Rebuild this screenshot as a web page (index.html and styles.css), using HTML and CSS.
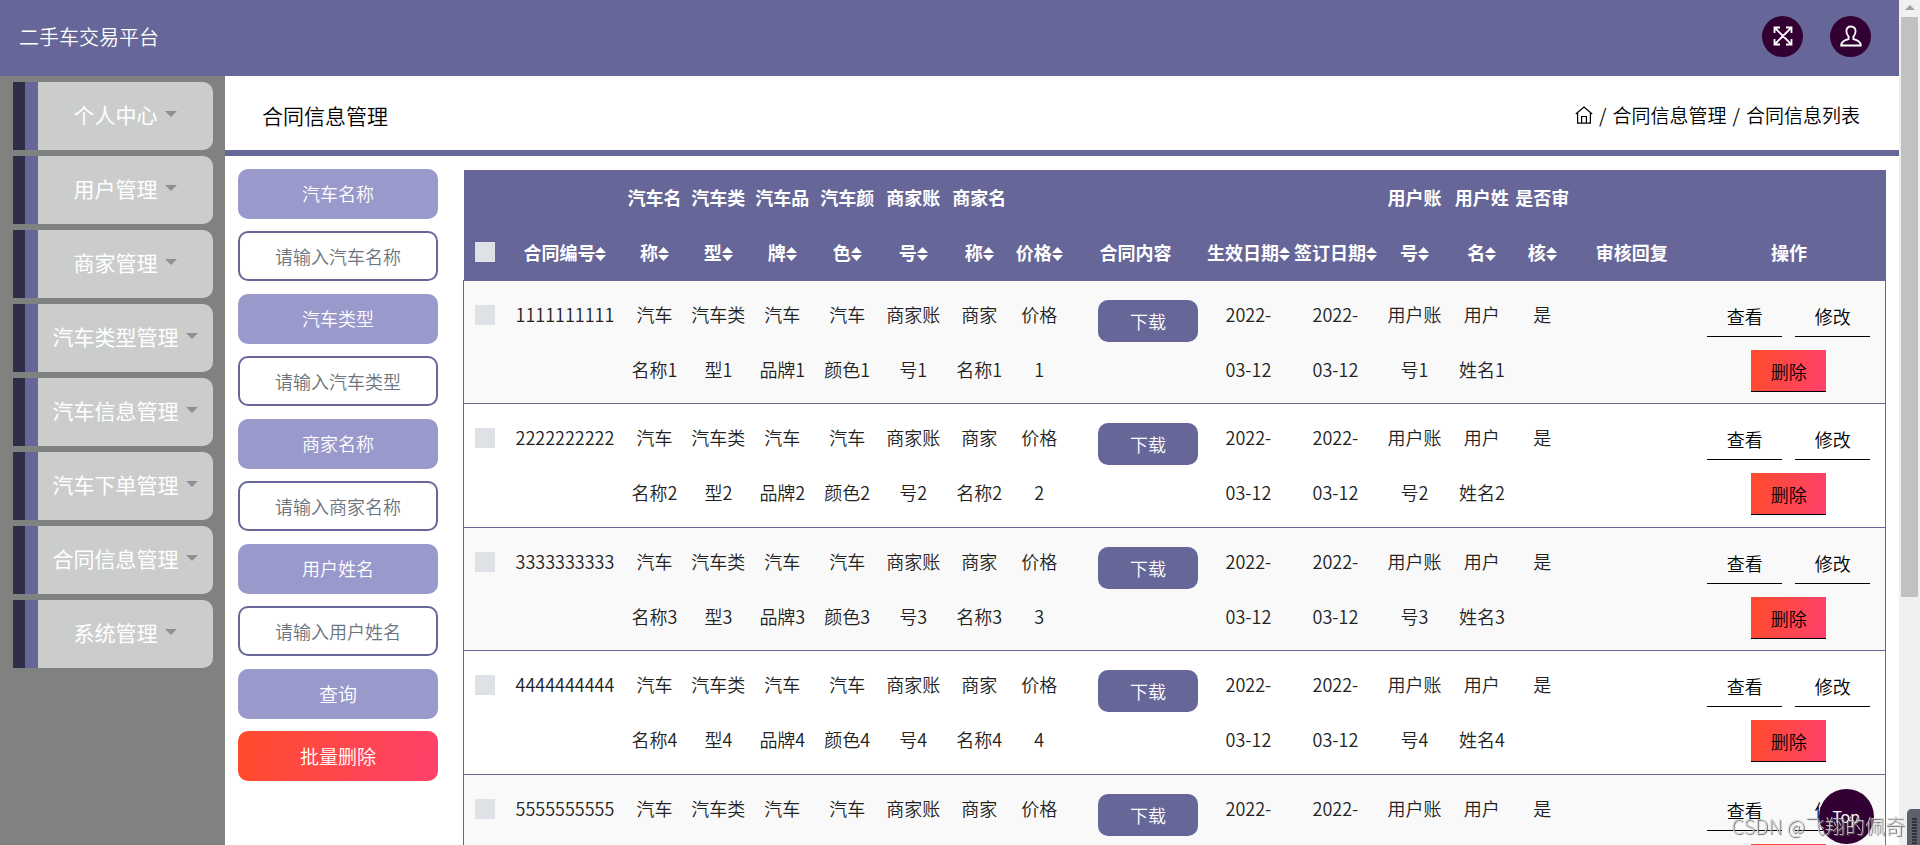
FILE: index.html
```html
<!DOCTYPE html>
<html lang="zh-CN">
<head>
<meta charset="utf-8">
<title>二手车交易平台</title>
<link rel="stylesheet" href="styles.css">
</head>
<body>
<svg class="sprite" aria-hidden="true">
  <symbol id="sort" viewBox="0 0 11 14"><path d="M5.500 0L11 6H0zM5.500 14L11 8H0z" fill="currentColor"/></symbol>
</svg>
<div class="app">
  <header class="topbar">
    <span class="brand">二手车交易平台</span>
    <div class="tools">
      <button class="round" type="button" aria-label="全屏">
        <svg viewBox="0 0 20 20" width="20" height="20" fill="none" stroke="currentColor" stroke-width="1.800"><path d="M1.500 7V1.500H7M13 1.500h5.500V7M18.500 13v5.500H13M7 18.500H1.500V13M2 2l16 16M18 2L2 18"/></svg>
      </button>
      <button class="round" type="button" aria-label="用户">
        <svg viewBox="0 0 22 22" width="22" height="22" fill="none" stroke="currentColor" stroke-width="1.800"><path d="M11 1.500c-3 0-4.600 2-4.600 4.800 0 2.600 1 4 2.200 5.300v2.600C4.500 15.400 1.500 16.400 1.200 20.500h19.600c-.3-4.100-3.300-5.100-7.400-6.300v-2.600c1.200-1.300 2.200-2.700 2.200-5.300 0-2.800-1.600-4.800-4.600-4.800z"/></svg>
      </button>
    </div>
  </header>
  <div class="body">
    <nav class="sidebar">
      <button class="menu" type="button"><span>个人中心</span></button>
      <button class="menu" type="button"><span>用户管理</span></button>
      <button class="menu" type="button"><span>商家管理</span></button>
      <button class="menu" type="button"><span>汽车类型管理</span></button>
      <button class="menu" type="button"><span>汽车信息管理</span></button>
      <button class="menu" type="button"><span>汽车下单管理</span></button>
      <button class="menu" type="button"><span>合同信息管理</span></button>
      <button class="menu" type="button"><span>系统管理</span></button>
    </nav>
    <main class="main">
      <div class="heading">
        <h1>合同信息管理</h1>
        <div class="crumbs">
          <a href="#" aria-label="首页"><svg viewBox="0 0 18 18" width="18" height="18" fill="none" stroke="currentColor" stroke-width="1.200"><path d="M.8 8L9 1l8.200 7M2.600 7v10.200h12.800V7M6.600 17v-6.500h4.800V17"/></svg></a>
          <span>/</span><a href="#">合同信息管理</a><span>/</span><span>合同信息列表</span>
        </div>
      </div>
      <div class="content">
        <form class="filters">
          <div class="field"><label for="f1">汽车名称</label><input id="f1" type="text" placeholder="请输入汽车名称"></div>
          <div class="field"><label for="f2">汽车类型</label><input id="f2" type="text" placeholder="请输入汽车类型"></div>
          <div class="field"><label for="f3">商家名称</label><input id="f3" type="text" placeholder="请输入商家名称"></div>
          <div class="field"><label for="f4">用户姓名</label><input id="f4" type="text" placeholder="请输入用户姓名"></div>
          <div class="field"><button class="query" type="button">查询</button><button class="batch" type="button">批量删除</button></div>
        </form>
        <table class="grid">
          <colgroup><col class="c-check"><col class="c-no"><col class="c-s"><col class="c-s"><col class="c-s"><col class="c-m"><col class="c-m"><col class="c-m"><col class="c-price"><col class="c-file"><col class="c-date"><col class="c-date"><col class="c-acct"><col class="c-s"><col class="c-ok"><col class="c-reply"><col class="c-act"></colgroup>
          <thead>
            <tr>
              <th class="pick"><input type="checkbox" aria-label="全选"></th>
              <th><button type="button">合同编号<svg><use href="#sort"/></svg></button></th>
              <th><button type="button">汽车名<br>称<svg><use href="#sort"/></svg></button></th>
              <th><button type="button">汽车类<br>型<svg><use href="#sort"/></svg></button></th>
              <th><button type="button">汽车品<br>牌<svg><use href="#sort"/></svg></button></th>
              <th><button type="button">汽车颜<br>色<svg><use href="#sort"/></svg></button></th>
              <th><button type="button">商家账<br>号<svg><use href="#sort"/></svg></button></th>
              <th><button type="button">商家名<br>称<svg><use href="#sort"/></svg></button></th>
              <th><button type="button">价格<svg><use href="#sort"/></svg></button></th>
              <th>合同内容</th>
              <th><button type="button">生效日期<svg><use href="#sort"/></svg></button></th>
              <th><button type="button">签订日期<svg><use href="#sort"/></svg></button></th>
              <th><button type="button">用户账<br>号<svg><use href="#sort"/></svg></button></th>
              <th><button type="button">用户姓<br>名<svg><use href="#sort"/></svg></button></th>
              <th><button type="button">是否审<br>核<svg><use href="#sort"/></svg></button></th>
              <th>审核回复</th>
              <th>操作</th>
            </tr>
          </thead>
          <tbody>
            <tr><td class="pick"><input type="checkbox" aria-label="选择 1"></td><td>1111111111</td><td>汽车<br>名称1</td><td>汽车类<br>型1</td><td>汽车<br>品牌1</td><td>汽车<br>颜色1</td><td>商家账<br>号1</td><td>商家<br>名称1</td><td>价格<br>1</td><td class="file"><button type="button">下载</button></td><td>2022-<br>03-12</td><td>2022-<br>03-12</td><td>用户账<br>号1</td><td>用户<br>姓名1</td><td>是</td><td></td><td><div class="actions"><button type="button">查看</button><button type="button">修改</button><button class="del" type="button">删除</button></div></td></tr>
            <tr><td class="pick"><input type="checkbox" aria-label="选择 2"></td><td>2222222222</td><td>汽车<br>名称2</td><td>汽车类<br>型2</td><td>汽车<br>品牌2</td><td>汽车<br>颜色2</td><td>商家账<br>号2</td><td>商家<br>名称2</td><td>价格<br>2</td><td class="file"><button type="button">下载</button></td><td>2022-<br>03-12</td><td>2022-<br>03-12</td><td>用户账<br>号2</td><td>用户<br>姓名2</td><td>是</td><td></td><td><div class="actions"><button type="button">查看</button><button type="button">修改</button><button class="del" type="button">删除</button></div></td></tr>
            <tr><td class="pick"><input type="checkbox" aria-label="选择 3"></td><td>3333333333</td><td>汽车<br>名称3</td><td>汽车类<br>型3</td><td>汽车<br>品牌3</td><td>汽车<br>颜色3</td><td>商家账<br>号3</td><td>商家<br>名称3</td><td>价格<br>3</td><td class="file"><button type="button">下载</button></td><td>2022-<br>03-12</td><td>2022-<br>03-12</td><td>用户账<br>号3</td><td>用户<br>姓名3</td><td>是</td><td></td><td><div class="actions"><button type="button">查看</button><button type="button">修改</button><button class="del" type="button">删除</button></div></td></tr>
            <tr><td class="pick"><input type="checkbox" aria-label="选择 4"></td><td>4444444444</td><td>汽车<br>名称4</td><td>汽车类<br>型4</td><td>汽车<br>品牌4</td><td>汽车<br>颜色4</td><td>商家账<br>号4</td><td>商家<br>名称4</td><td>价格<br>4</td><td class="file"><button type="button">下载</button></td><td>2022-<br>03-12</td><td>2022-<br>03-12</td><td>用户账<br>号4</td><td>用户<br>姓名4</td><td>是</td><td></td><td><div class="actions"><button type="button">查看</button><button type="button">修改</button><button class="del" type="button">删除</button></div></td></tr>
            <tr><td class="pick"><input type="checkbox" aria-label="选择 5"></td><td>5555555555</td><td>汽车<br>名称5</td><td>汽车类<br>型5</td><td>汽车<br>品牌5</td><td>汽车<br>颜色5</td><td>商家账<br>号5</td><td>商家<br>名称5</td><td>价格<br>5</td><td class="file"><button type="button">下载</button></td><td>2022-<br>03-12</td><td>2022-<br>03-12</td><td>用户账<br>号5</td><td>用户<br>姓名5</td><td>是</td><td></td><td><div class="actions"><button type="button">查看</button><button type="button">修改</button><button class="del" type="button">删除</button></div></td></tr>
          </tbody>
        </table>
      </div>
    </main>
  </div>
</div>
<div class="scroll" aria-hidden="true"><i class="arrow"></i><i class="thumb"></i></div>
<button class="totop" type="button">Top</button>
<div class="meter" aria-hidden="true"></div>
<div class="watermark">CSDN @飞翔的佩奇</div>
</body>
</html>
```
FILE: styles.css
```css
* { box-sizing: border-box; }

body {
  margin: 0;
  height: 100vh;
  display: flex;
  overflow: hidden;
  background: #fff;
  color: #222;
  font-family: "Noto Sans CJK SC", sans-serif;
  font-size: 18px;
  font-weight: 350;
}

button, input {
  font: inherit;
  color: inherit;
  margin: 0;
  padding: 0;
  border: 0;
  background: none;
}

.sprite { position: absolute; width: 0; height: 0; }

.app { flex: 1; min-width: 0; display: flex; flex-direction: column; }

.topbar {
  flex: none;
  height: 76px;
  padding: 0 28px 4px 19px;
  display: flex;
  align-items: center;
  justify-content: space-between;
  background: #669;
  color: #fff;
}
.brand { font-size: 20px; }
.tools { display: flex; gap: 27px; }
.round {
  width: 41px;
  height: 41px;
  border-radius: 50%;
  background: #303;
  display: flex;
  align-items: center;
  justify-content: center;
}

.body { flex: 1; min-height: 0; display: flex; }

.sidebar {
  flex: none;
  width: 225px;
  padding: 6px 12px 0 13px;
  display: flex;
  flex-direction: column;
  gap: 6px;
  background: #808280;
}
.menu {
  height: 68px;
  display: flex;
  align-items: center;
  justify-content: center;
  gap: 7px;
  border-left: 12px solid #2f2e46;
  border-radius: 0 10px 10px 0;
  background: linear-gradient(to right, #669 13px, #cbcdcc 13px);
  padding: 0 0 4px 12px;
  color: #fff;
  font-size: 21px;
  font-weight: 400;
}
.menu::after {
  content: "";
  border: 6px solid transparent;
  border-top-color: #8f918f;
  border-bottom: 0;
}

.main { flex: 1; min-width: 0; }
.heading {
  height: 80px;
  padding: 3px 39px 0 37px;
  display: flex;
  align-items: center;
  justify-content: space-between;
  border-bottom: 6px solid #669;
  color: #000;
}
.heading h1 { margin: 0; font-size: 21px; font-weight: inherit; }
.crumbs { display: flex; align-items: center; gap: 6px; font-size: 19px; }
.crumbs a { color: inherit; text-decoration: none; }
.crumbs svg { display: block; }

.content { display: flex; align-items: flex-start; gap: 25px; padding: 13px 13px 0; }

.filters { flex: none; width: 200px; display: flex; flex-direction: column; gap: 13px; }
.field { display: flex; flex-direction: column; gap: 12px; text-align: center; }
.field > * { height: 50px; border-radius: 10px; line-height: 48px; }
.field label, .query { background: #99c; color: #fff; }
.field input {
  width: 100%;
  border: 2px solid #669;
  background: #fff;
  text-align: center;
  line-height: normal;
}
.field input::placeholder { color: #6c757d; opacity: 1; }
.batch { background: linear-gradient(100deg, #ff4b2b, #ff416c); color: #fff; }
.query, .batch { font-size: 19px; }

.grid {
  flex: 1;
  min-width: 0;
  margin-top: 1px;
  table-layout: fixed;
  border-collapse: collapse;
  line-height: 55px;
  text-align: center;
}
.c-check { width: 44px; }
.c-no { width: 115px; }
.c-s { width: 64px; }
.c-m { width: 66px; }
.c-price { width: 54px; }
.c-file { width: 139px; }
.c-date { width: 87px; }
.c-acct { width: 71px; }
.c-ok { width: 57px; }
.c-reply { width: 122px; }
.c-act { width: 193px; }

.grid th {
  padding: 0;
  background: #669;
  color: #fff;
  font-weight: 700;
  vertical-align: bottom;
  white-space: nowrap;
}
.grid th button { display: block; width: 100%; line-height: 55px; }
.grid th svg { width: 11px; height: 14px; vertical-align: -1px; }
.grid td { padding: 6px 0; vertical-align: top; white-space: nowrap; }
.grid tbody tr { border: 1px solid #669; }
.grid tbody tr:nth-child(odd) { background: #f9f9f9; }
.grid tbody tr:nth-child(even) td { padding-bottom: 7px; }

.pick input {
  appearance: none;
  display: block;
  width: 20px;
  height: 20px;
  margin-left: 11px;
  background: #dee2e6;
}
.grid th.pick { padding-bottom: 18px; }
.grid td.pick { padding-top: 24px; }

.grid td.file { padding: 19px 7px 0 32px; }
.file button {
  display: block;
  width: 100%;
  height: 42px;
  line-height: 42px;
  border-radius: 10px;
  background: #669;
  color: #fff;
}

.actions {
  display: flex;
  flex-wrap: wrap;
  justify-content: center;
  gap: 13px;
  padding: 8px 8px 0;
  line-height: 38px;
}
.actions button { width: 75px; height: 42px; border-bottom: 1px solid #000; color: #000; }
.actions .del { background: linear-gradient(100deg, #ff4b2b, #ff416c); }

.scroll {
  flex: none;
  width: 21px;
  padding: 5px 2px 0;
  display: flex;
  flex-direction: column;
  align-items: center;
  gap: 7px;
  background: #f0f0f0;
}
.arrow { border: 5px solid transparent; border-top: 0; border-bottom-color: #a0a0a0; }
.thumb { width: 100%; height: 69%; background: #c1c1c1; }

.totop {
  position: fixed;
  right: 46px;
  bottom: 1px;
  width: 55px;
  height: 55px;
  border-radius: 50%;
  background: #303;
  color: #fff;
  font: 16px "Noto Sans", sans-serif;
}
.meter {
  position: fixed;
  right: 0;
  bottom: 0;
  width: 13px;
  height: 36px;
  border-radius: 5px 0 0 0;
  border: 2px solid #5d616c;
  border-width: 8px 3px 0 5px;
  background: repeating-linear-gradient(#5d616c 0 1px, #30333b 1px 3px);
}
.watermark {
  position: fixed;
  right: 15px;
  bottom: 5px;
  color: rgba(215, 215, 215, 0.85);
  font: 20px "Noto Sans CJK SC", sans-serif;
  font-weight: 300;
  line-height: 28px;
  text-shadow: 1px 1px 1px #666;
  pointer-events: none;
}
```
